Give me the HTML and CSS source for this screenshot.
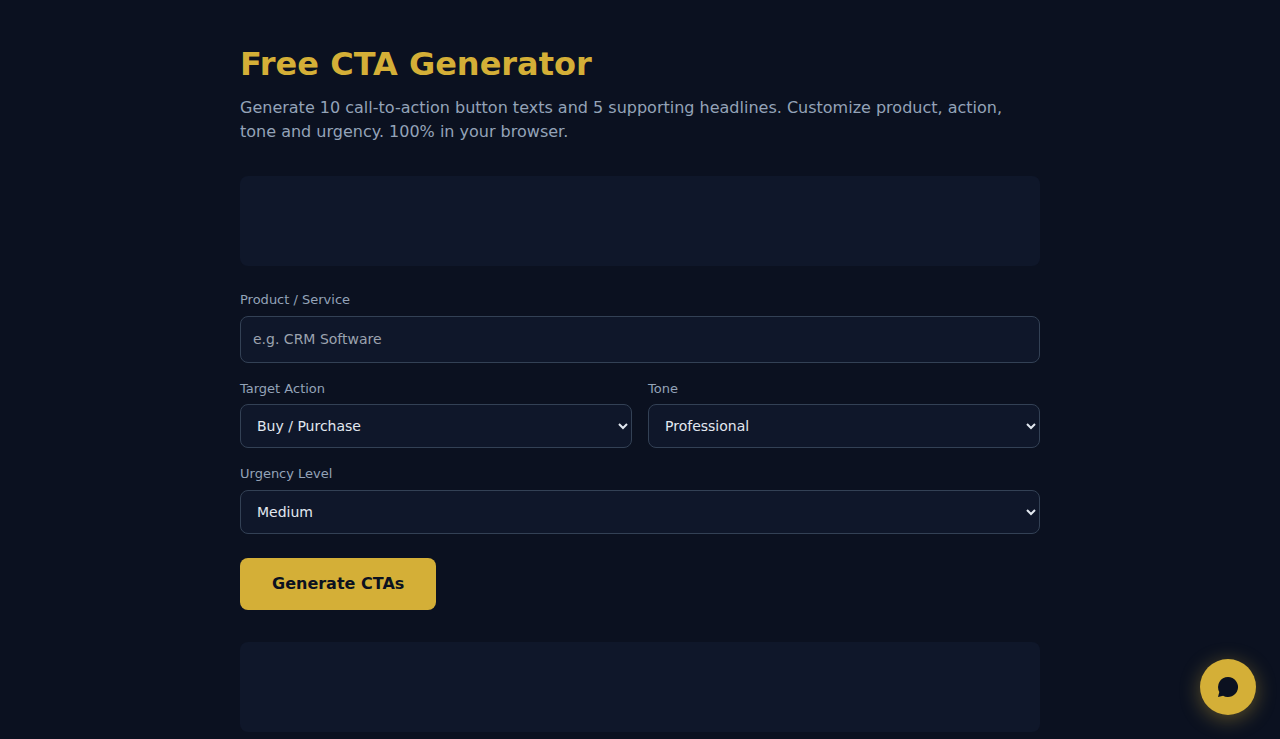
FILE: index.html
```html
<!DOCTYPE html>
<html lang="en">
<head>
    <meta charset="UTF-8">
    <meta name="viewport" content="width=device-width, initial-scale=1.0">
    <title>Free CTA Generator</title>
    <link rel="stylesheet" href="styles.css">
</head>
<body>
    <main class="container">
        <h1>Free CTA Generator</h1>
        <p class="subtitle">Generate 10 call-to-action button texts and 5 supporting headlines. Customize product, action, tone and urgency. 100% in your browser.</p>

        <div class="ad-slot"></div>

        <form class="cta-form">
            <div class="field">
                <label for="product">Product / Service</label>
                <input type="text" id="product" placeholder="e.g. CRM Software">
            </div>
            <div class="row">
                <div class="field">
                    <label for="action">Target Action</label>
                    <select id="action">
                        <option>Buy / Purchase</option>
                        <option>Sign Up</option>
                        <option>Download</option>
                    </select>
                </div>
                <div class="field">
                    <label for="tone">Tone</label>
                    <select id="tone">
                        <option>Professional</option>
                        <option>Friendly</option>
                        <option>Bold</option>
                    </select>
                </div>
            </div>
            <div class="field">
                <label for="urgency">Urgency Level</label>
                <select id="urgency">
                    <option>Low</option>
                    <option selected>Medium</option>
                    <option>High</option>
                </select>
            </div>
            <button type="button" class="btn">Generate CTAs</button>
        </form>

        <div class="ad-slot"></div>
    </main>

    <button type="button" class="chat-btn" aria-label="Open chat">
        <svg viewBox="0 0 24 24" width="24" height="24" fill="currentColor" aria-hidden="true">
            <path d="M12 2a10 10 0 0 0-8.7 14.9L2 22l5.1-1.3A10 10 0 1 0 12 2z"/>
        </svg>
    </button>
</body>
</html>
```
FILE: styles.css
```css
* {
    box-sizing: border-box;
    margin: 0;
    padding: 0;
}

body {
    font-family: "DejaVu Sans", sans-serif;
    background: #0b1120;
    color: #e2e8f0;
    line-height: 1.5;
    min-height: 100vh;
}

.container {
    max-width: 832px;
    margin: 0 auto;
    padding: 40px 16px;
}

h1 {
    color: #d4af37;
    font-size: 32px;
    margin-bottom: 8px;
}

.subtitle {
    color: #94a3b8;
    margin-bottom: 32px;
}

.ad-slot {
    min-height: 90px;
    background: #0f172a;
    border-radius: 8px;
}

.cta-form {
    margin: 24px 0 32px;
}

.row {
    display: grid;
    grid-template-columns: 1fr 1fr;
    gap: 16px;
}

.field {
    margin-bottom: 16px;
}

label {
    display: block;
    color: #94a3b8;
    font-size: 13px;
    margin-bottom: 6px;
}

input,
select {
    display: block;
    width: 100%;
    padding: 12px;
    background: #0f172a;
    border: 1px solid #334155;
    border-radius: 8px;
    color: #e2e8f0;
    font-family: inherit;
    font-size: 14px;
}

input {
    height: 47px;
}

input::placeholder {
    color: #9ca3af;
}

select {
    height: 44px;
}

.btn {
    margin-top: 8px;
    padding: 14px 32px;
    background: #d4af37;
    color: #0b1120;
    border: none;
    border-radius: 8px;
    font-family: inherit;
    font-size: 16px;
    font-weight: 700;
    line-height: 24px;
    cursor: pointer;
}

/* floating chat button */
.chat-btn {
    position: fixed;
    right: 24px;
    bottom: 24px;
    width: 56px;
    height: 56px;
    display: flex;
    align-items: center;
    justify-content: center;
    background: #d4af37;
    color: #0b1120;
    border: none;
    border-radius: 50%;
    box-shadow: 0 4px 20px rgba(212, 175, 55, 0.4);
    cursor: pointer;
}
```
